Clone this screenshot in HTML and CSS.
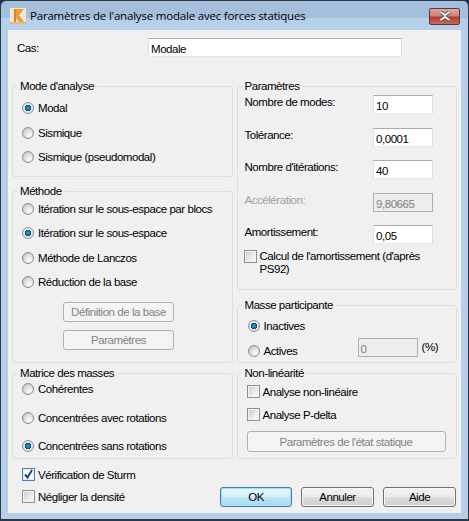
FILE: index.html
```html
<!DOCTYPE html>
<html lang="fr">
<head>
  <meta charset="UTF-8" />
  <title>Paramètres de l'analyse modale avec forces statiques</title>
  <link rel="stylesheet" href="styles.css">
</head>

<body>
  <div class="window">

    <div class="titlebar">
      <svg class="app-icon" width="16" height="16" viewBox="0 0 16 16">
        <rect width="16" height="16" fill="#efe6d6"/>
        <path d="M0 14h16v2H0z" fill="#e9b878"/>
        <path d="M4 1h10L9 7l5 7H9L6 10v4H4z" fill="#ee9d35"/>
        <path d="M4 1h2v13H4z" fill="#d8851f"/>
      </svg>
      <span class="title">Paramètres de l'analyse modale avec forces statiques</span>
      <button class="close" type="button">
        <svg width="14" height="10" viewBox="0 0 14 10">
          <path d="M2.500 1l4.500 3 4.500-3M2.500 9l4.500-3 4.500 3" fill="none" stroke="#49505f" stroke-width="3.600"/>
          <path d="M2.500 1l4.500 3 4.500-3M2.500 9l4.500-3 4.500 3" fill="none" stroke="#f4f4f4" stroke-width="2"/>
        </svg>
      </button>
    </div>

    <div class="pane">

      <div class="case-row">
        <label class="case-label">Cas:</label>
        <div class="field case-field">Modale</div>
      </div>

      <div class="columns">
        <div class="column">

          <fieldset class="group group-mode">
            <legend>Mode d'analyse</legend>
            <div class="options">
              <label class="opt"><span class="radio on"></span>Modal</label>
              <label class="opt"><span class="radio"></span>Sismique</label>
              <label class="opt"><span class="radio"></span>Sismique (pseudomodal)</label>
            </div>
          </fieldset>

          <fieldset class="group group-method">
            <legend>Méthode</legend>
            <div class="options">
              <label class="opt"><span class="radio"></span>Itération sur le sous-espace par blocs</label>
              <label class="opt"><span class="radio on"></span>Itération sur le sous-espace</label>
              <label class="opt"><span class="radio"></span>Méthode de Lanczos</label>
              <label class="opt"><span class="radio"></span>Réduction de la base</label>
            </div>
            <div class="method-buttons">
              <button class="btn" type="button" disabled>Définition de la base</button>
              <button class="btn" type="button" disabled>Paramètres</button>
            </div>
          </fieldset>

          <fieldset class="group group-matrix">
            <legend>Matrice des masses</legend>
            <div class="options">
              <label class="opt"><span class="radio"></span>Cohérentes</label>
              <label class="opt"><span class="radio"></span>Concentrées avec rotations</label>
              <label class="opt"><span class="radio on"></span>Concentrées sans rotations</label>
            </div>
          </fieldset>

        </div>
        <div class="column">

          <fieldset class="group group-params">
            <legend>Paramètres</legend>
            <div class="param-rows">
              <div class="param"><label>Nombre de modes:</label><div class="field">10</div></div>
              <div class="param"><label>Tolérance:</label><div class="field">0,0001</div></div>
              <div class="param"><label>Nombre d'itérations:</label><div class="field">40</div></div>
              <div class="param off"><label>Accélération:</label><div class="field">9,80665</div></div>
              <div class="param"><label>Amortissement:</label><div class="field">0,05</div></div>
            </div>
            <label class="opt damping"><span class="check"></span><span>Calcul de l'amortissement (d'après PS92)</span></label>
          </fieldset>

          <fieldset class="group group-mass">
            <legend>Masse participante</legend>
            <label class="opt"><span class="radio on"></span>Inactives</label>
            <div class="mass-row">
              <label class="opt"><span class="radio"></span>Actives</label>
              <div class="field off">0</div>
              <span class="percent">(%)</span>
            </div>
          </fieldset>

          <fieldset class="group group-nonlin">
            <legend>Non-linéarité</legend>
            <div class="options">
              <label class="opt"><span class="check"></span>Analyse non-linéaire</label>
              <label class="opt"><span class="check"></span>Analyse P-delta</label>
            </div>
            <button class="btn btn-static" type="button" disabled>Paramètres de l'état statique</button>
          </fieldset>

        </div>
      </div>

      <div class="footer">
        <div class="footer-checks">
          <label class="opt">
            <span class="check checked">
              <svg width="11" height="11" viewBox="0 0 11 11"><path d="M2 5.500l2.500 3L9 1" fill="none" stroke="#1c3f94" stroke-width="2"/></svg>
            </span>Vérification de Sturm
          </label>
          <label class="opt"><span class="check"></span>Négliger la densité</label>
        </div>
        <div class="footer-buttons">
          <button class="btn btn-main btn-default" type="button">OK</button>
          <button class="btn btn-main" type="button">Annuler</button>
          <button class="btn btn-main" type="button">Aide</button>
        </div>
      </div>

    </div>
  </div>
</body>
</html>
```

FILE: styles.css
```css
* {
  margin: 0;
  padding: 0;
  box-sizing: border-box;
}

html, body {
  height: 100%;
}

body {
  background: #20303a;
  font-family: "Liberation Sans", Arial, sans-serif;
  font-size: 11.500px;
  letter-spacing: -0.450px;
  line-height: 14px;
  color: #000;
  overflow: hidden;
}

.window {
  height: 521px;
  display: flex;
  flex-direction: column;
  padding: 0 7px 6px;
  border: 1px solid #2c3a48;
  border-bottom-width: 2px;
  border-radius: 6px 6px 0 0;
  background: linear-gradient(#a4bfdb 0, #a4bfdb 17px, #b7d0ea 17px, #b7d0ea 100%);
}

/* title bar */
.titlebar {
  height: 29px;
  display: flex;
  align-items: center;
  padding: 0 2px 3px 2px;
  flex-shrink: 0;
}

.app-icon {
  flex-shrink: 0;
  margin-top: 4px;
}

.title {
  margin: 4px 0 0 4px;
  font-family: "Open Sans", sans-serif;
  font-size: 11.500px;
  letter-spacing: -0.200px;
  color: #000;
  white-space: nowrap;
}

.close {
  width: 31px;
  height: 17px;
  margin: 4px -1px 0 auto;
  display: flex;
  align-items: center;
  justify-content: center;
  border: 1px solid #5c3a3f;
  border-radius: 2px;
  background: linear-gradient(#dca79f 0, #cf7e71 48%, #b33b28 52%, #c9695a 100%);
}

/* client area */
.pane {
  flex: 1;
  background: #f0f0f0;
  padding: 8px 4px 5px;
  display: flex;
  flex-direction: column;
}

.case-row {
  display: flex;
  align-items: center;
  height: 19px;
}

.case-label {
  width: 136px;
  padding-left: 5px;
}

.field {
  height: 19px;
  width: 60px;
  padding: 3px 2px 0;
  background: #fff;
  border: 1px solid #e3e9ef;
  border-top-color: #abadb3;
  border-left-color: #e2e3ea;
  border-right-color: #dbdfe6;
}

.case-field {
  width: 254px;
}

.field.off,
.param.off .field {
  background: #ededed;
  color: #7f7f7f;
  border-color: #afafaf;
}

.param.off label {
  color: #a0a0a0;
}

.columns {
  display: flex;
  gap: 4px;
  margin-top: 22px;
}

.column {
  width: 221px;
  display: flex;
  flex-direction: column;
}

/* group boxes */
.group {
  border: 1px solid #d9dfe3;
  border-radius: 3px;
  min-width: 0;
}

.group legend {
  margin-left: 4px;
  padding: 0 3px;
  line-height: 14px;
}

.group > .options,
.group > .opt,
.group > .mass-row,
.group > .btn-static {
  margin-left: 9px;
}

.opt {
  display: flex;
  align-items: flex-start;
  gap: 4px;
  white-space: nowrap;
}

.options {
  display: flex;
  flex-direction: column;
}

.radio {
  width: 12px;
  height: 12px;
  margin-top: 1px;
  flex-shrink: 0;
  border-radius: 50%;
  border: 1px solid #8f8f8f;
  background: radial-gradient(circle at 65% 70%, #fbfbfb 0, #e2e2e2 45%, #b5b5b5 100%);
}

.radio.on {
  border-color: #8a8f96;
  background: radial-gradient(circle at 50% 50%, #35ace0 0, #0c74ae 28%, #06406f 44%, #e8e8e8 50%, #e4e4e4 70%, #c0c0c0 100%);
}

.check {
  width: 13px;
  height: 13px;
  margin-right: -1px;
  flex-shrink: 0;
  display: flex;
  align-items: center;
  justify-content: center;
  border: 1px solid #8e8f8f;
  background: linear-gradient(135deg, #c8c8c8 0, #eeeeee 60%, #fafafa 100%);
  box-shadow: inset 0 0 0 1px #f4f4f4;
}

.check.checked {
  border-color: #4f83b5;
  background: #fff;
  box-shadow: inset 0 0 0 1px #dfe9f3;
}

.group-mode {
  height: 98px;
  padding-top: 8px;
}

.group-mode .options {
  gap: 10.500px;
}

.group-method {
  height: 179px;
  margin-top: 7px;
  padding-top: 4px;
}

.group-method .options {
  gap: 10.300px;
}

.method-buttons {
  display: flex;
  flex-direction: column;
  align-items: flex-start;
  gap: 8px;
  margin: 13px 0 0 50px;
}

.method-buttons .btn {
  width: 111px;
  height: 20px;
}

.group-matrix {
  height: 93px;
  margin-top: 3px;
  padding-top: 2px;
}

.group-matrix .options {
  gap: 14.500px;
}

.group-params {
  height: 211px;
  padding: 2px 23px 0 0;
}

.param-rows {
  display: flex;
  flex-direction: column;
  gap: 13.500px;
  margin-left: 6px;
}

.param {
  display: flex;
  justify-content: space-between;
  align-items: flex-start;
}

.param label {
  padding-left: 1px;
}

.group > .damping {
  margin: 6px 0 0 6px;
  gap: 4px;
  white-space: normal;
  line-height: 13px;
}

.group-mass {
  height: 65px;
  margin-top: 8px;
  padding-top: 7px;
}

.group-mass > .opt,
.group-mass > .mass-row {
  margin-left: 10px;
}

.mass-row {
  display: flex;
  align-items: flex-start;
  margin-top: 5px;
}

.mass-row .opt {
  width: 110px;
  margin-top: 6px;
}

.percent {
  margin: 2px 0 0 4px;
}

.group-nonlin {
  height: 93px;
  margin-top: 3px;
  padding-top: 5px;
}

.group-nonlin .options {
  gap: 9px;
}

/* buttons */
.btn {
  font-family: "Liberation Sans", Arial, sans-serif;
  font-size: 11.500px;
  letter-spacing: -0.450px;
  color: #000;
  border: 1px solid #707070;
  border-radius: 3px;
  background: linear-gradient(#f2f2f2 0, #ebebeb 48%, #dddddd 52%, #cfcfcf 100%);
  box-shadow: inset 0 0 0 1px #f7f7f7;
}

.btn:disabled {
  color: #838383;
  border-color: #adb2b5;
  background: #f4f4f4;
  box-shadow: none;
}

.btn-static {
  display: block;
  width: 199px;
  height: 21px;
  margin-top: 9px;
}

.footer {
  display: flex;
  justify-content: space-between;
  align-items: flex-end;
  margin-top: 9px;
  padding-left: 10px;
}

.footer-checks {
  display: flex;
  flex-direction: column;
  gap: 8px;
  padding-bottom: 3px;
}

.footer-buttons {
  display: flex;
  gap: 9px;
  padding-right: 1px;
}

.btn-main {
  width: 73px;
  height: 20px;
}

.btn-default {
  width: 72px;
  border-color: #3c7fb1;
  background: linear-gradient(#e6f5fb 0, #d8eff9 48%, #bde6f7 52%, #a7d9f0 100%);
  box-shadow: inset 0 0 0 1px #9fe0f7;
}
```
